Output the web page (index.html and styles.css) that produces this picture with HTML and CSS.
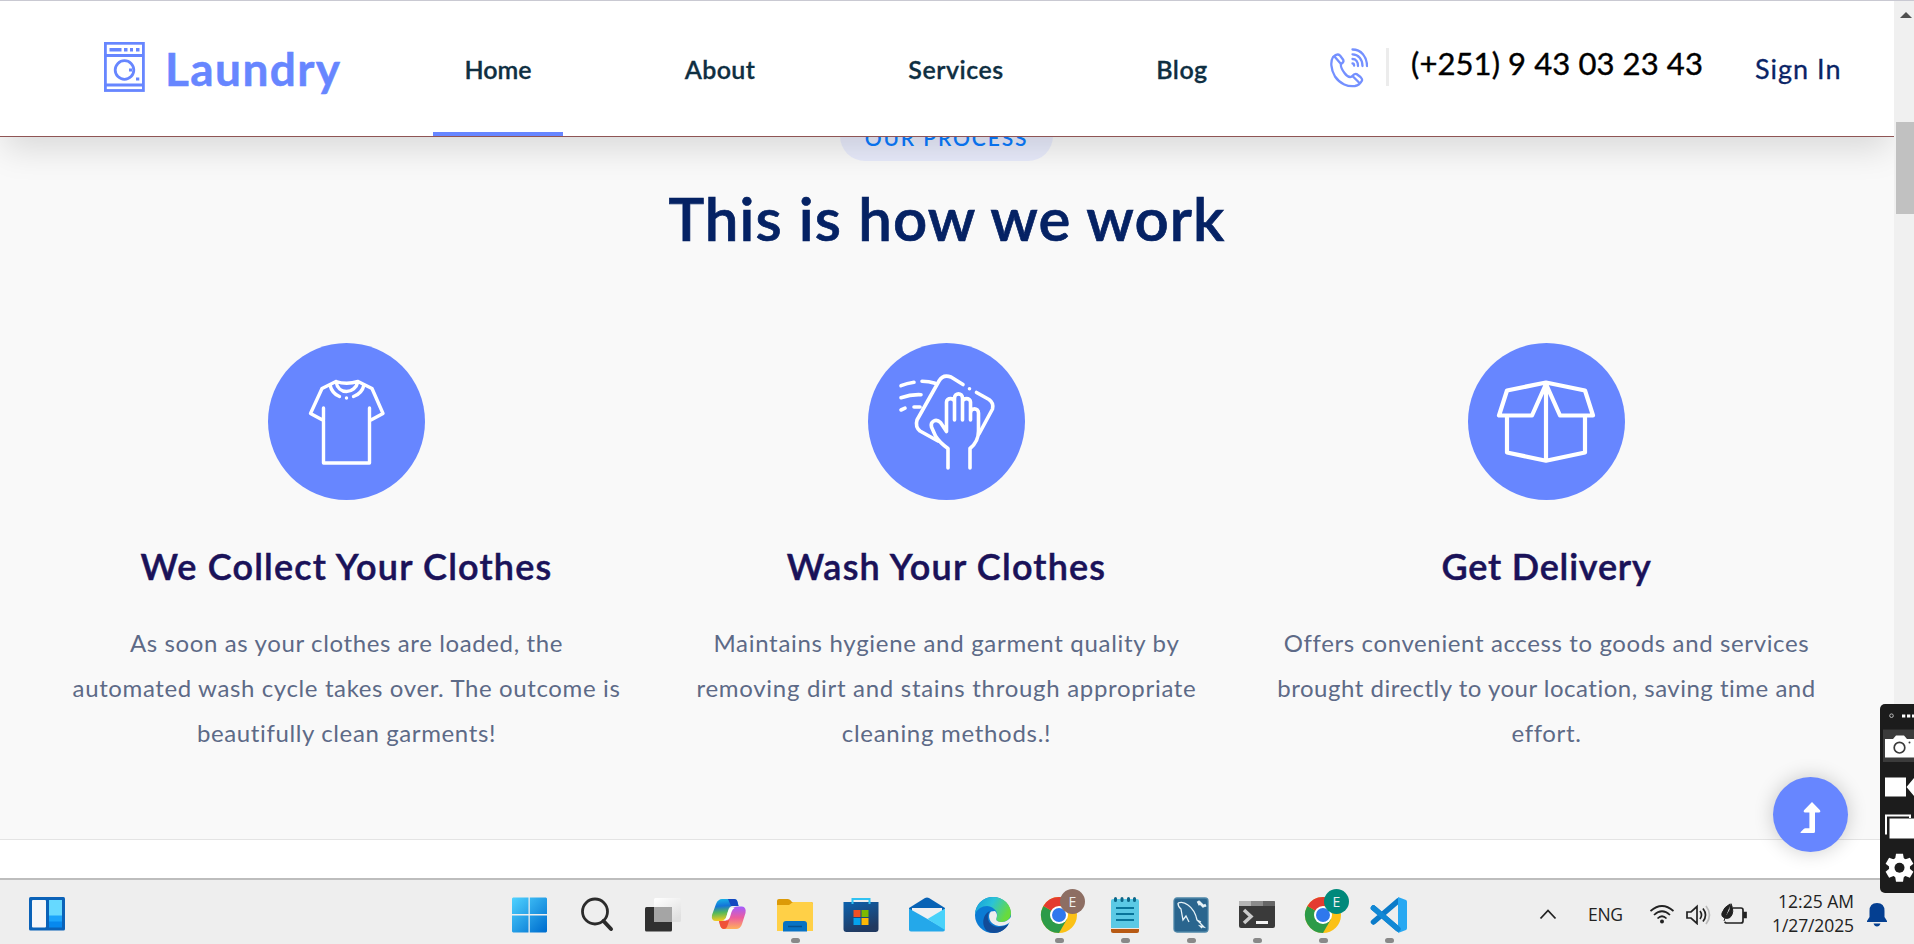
FILE: index.html
```html
<!DOCTYPE html>
<html lang="en">
<head>
<meta charset="utf-8">
<title>Laundry</title>
<link rel="stylesheet" href="styles.css">
</head>
<body>
<div class="browser">
  <div class="page">
    <header class="header">
      <a class="logo">
        <svg width="41" height="50" viewBox="0 0 41 50" fill="none" stroke="#6786ff"><rect x="1.4" y="1.3" width="38" height="47.2" stroke-width="2.8"/><path d="M1 13.5h39M1 43h39" stroke-width="2.8"/><path d="M5.5 7.7h12M20 7.7h3.5M26 7.7h3M32 7.7h3.5" stroke-width="3.4"/><circle cx="20.5" cy="28" r="9.3" stroke-width="2.8"/><path d="M25 28h3M32 37h3.3" stroke-width="3.2"/></svg>
        <span class="logo-text">Laundry</span>
      </a>
      <nav class="nav">
        <a class="nav-item active"><span>Home</span></a>
        <a class="nav-item about"><span>About</span></a>
        <a class="nav-item services"><span>Services</span></a>
        <a class="nav-item blog"><span>Blog</span></a>
      </nav>
      <div class="contact">
        <svg width="38" height="40" viewBox="0 0 38 40" fill="none" stroke="#7490ff" stroke-width="2.3" stroke-linecap="round" stroke-linejoin="round"><path d="M3 9C.5 13 .5 21 5 28.500C10 36 18 39 25 38C28 37.500 31 34.500 32 32.500C32.500 31 31.500 30 30.500 29L26.500 26C25 25.500 23.500 26.500 22 28.500C20 29.500 17 28.500 14.500 25C11.500 21 10.500 18 11 16C13.500 14.500 14 13 13 11.500L10 7.500C8.500 6 6 6 3 9z"/><path d="M4.500 8.500l6.500 7.500M22.500 28l6.500 6.500"/><path d="M22.500 1.500c8.500 0 14.500 7 14.500 16.500M22.500 6.300c6 0 10 5 10 11.700M22.500 11c3.500 0 5.500 3 5.500 7M22.500 15.500c1 0 1.600.8 1.600 2.200"/></svg>
        <i class="divider"></i>
        <span class="phone">(+251) 9 43 03 23 43</span>
        <a class="signin">Sign In</a>
      </div>
    </header>
    <section class="process">
      <span class="pill">OUR PROCESS</span>
      <h2 class="title">This is how we work</h2>
      <div class="steps">
        <article class="step">
          <svg class="step-icon" viewBox="28 23 157 157" fill="none" stroke="#fff" stroke-width="3.4" stroke-linecap="round" stroke-linejoin="round"><circle cx="106.500" cy="101.500" r="78.500" fill="#6786ff" stroke="none"/><path d="M83.500 88v55h46V88M83.500 100.500L70.500 93.500L82 68.500L90 64.500L96 61.500Q106.500 65 118 61.500L124 64.500L132 68.500L143 93.500L130 100.500M96 61.500C97 68 101.500 71.500 106.500 71.500S116.500 68 118 61.500M90 65Q92 73.500 99.500 76.500M124 65Q122 73.500 113.500 76.500M106.500 78v.1"/></svg>
          <h3 class="s1">We Collect Your Clothes</h3>
          <p>As soon as your clothes are loaded, the<br>automated wash cycle takes over. The outcome is<br>beautifully clean garments!</p>
        </article>
        <article class="step">
          <svg class="step-icon" viewBox="28 23 157 157" fill="none" stroke="#fff" stroke-width="3.6" stroke-linecap="round" stroke-linejoin="round"><circle cx="106.500" cy="101.500" r="78.500" fill="#6786ff" stroke="none"/><path d="M108 148V128.500C103 125 99 121.500 95.500 116L91.500 107C90 101.500 96 98 100.500 102.500L106.500 111.500V82C106.500 77.500 114.500 77.500 114.500 82V100V78C114.500 72.500 122.500 72.500 122.500 78V100V82C122.500 77.500 130.500 77.500 130.500 82V100V93C130.500 87.500 138.500 87.500 138.500 93V111C138.500 118 135.500 124 130 128.500V148"/><path d="M98 121L80 111Q75 107 77 100L99 61Q103 54 111 57L123 64.500M129.500 68.700v.1M136.500 72.500L149 79.500Q154 83 152.500 89L139 114M61 65.700q6-2.500 13-3.500M82 61.200q7 0 13 2M61 77.700q10-3.500 20-3M61 90l4-1.800M74 87h6"/></svg>
          <h3 class="s2">Wash Your Clothes</h3>
          <p class="p2">Maintains hygiene and garment quality by<br>removing dirt and stains through appropriate<br>cleaning methods.!</p>
        </article>
        <article class="step">
          <svg class="step-icon" viewBox="28 23 157 157" fill="none" stroke="#fff" stroke-width="4.2" stroke-linejoin="round"><circle cx="106.500" cy="101.500" r="78.500" fill="#6786ff" stroke="none"/><path d="M106 62.500L67 70.500L59 95.500H92L106 64L120 95.500H153L145 70.500ZM67 96v36.500l39 8.200l39-8.200V96M106 62v78"/></svg>
          <h3 class="s3">Get Delivery</h3>
          <p class="p3">Offers convenient access to goods and services<br><span>brought directly to your location, saving time and</span><br>effort.</p>
        </article>
      </div>
    </section>
  </div>
  <div class="scrollbar"><i class="arrow"></i><i class="thumb"></i></div>
</div>

<button class="to-top">
  <svg width="75" height="75" viewBox="0 0 75 75"><path d="M39 25l8 8.200q1 2-1 2.300H42V54.500q0 1.500-1.500 1.500H28q-1 0-.3-1l3-3q.7-.7 1.700-.7h4V35.500H32q-2-.3-1-2.300z" fill="#fff"/></svg>
</button>

<div class="capture">
  <svg width="34" height="189" viewBox="1880 704 34 189">
    <circle cx="1891.500" cy="715.700" r="1.800" fill="none" stroke="#bbb"/><path d="M1902 714.500h3.300v3h-3.300zM1907 714.500h3.300v3H1907zM1912 714.500h3v3h-3z" fill="#fff"/>
    <path d="M1883 729.500h31V762h-31z" fill="#3b3b3b"/>
    <path d="M1885 739h8l3-3.500h8l3 3.500h8v18.500h-30z" fill="#fff"/><circle cx="1899.500" cy="747.700" r="5.300" fill="#fff" stroke="#3b3b3b" stroke-width="1.700"/><circle cx="1909.500" cy="742.500" r="1" fill="#3b3b3b"/>
    <path d="M1885 777.500h21v19h-21zM1906.500 787l7.500-9v18z" fill="#fff"/>
    <path d="M1886 834.500v-19h24v2.500" fill="none" stroke="#fff" stroke-width="2"/><path d="M1889.500 818.500h25v20h-25z" fill="#fff"/>
    <g fill="#fff" transform="translate(1899.500 867.700)"><circle r="10.500"/><g id="tooth"><path d="M-4.500-8L-3.500-14h7l1 6v16l-1 6h-7l-1-6z"/></g><use href="#tooth" transform="rotate(60)"/><use href="#tooth" transform="rotate(120)"/><circle r="5" fill="#1c1c1c"/></g>
  </svg>
</div>

<footer class="taskbar">
  <svg class="widgets" width="36" height="34" viewBox="0 0 36 34"><rect width="36" height="33.500" rx="1.500" fill="#0b62b8"/><rect x="3" y="3" width="14" height="27.500" rx="1" fill="#f6f6f8"/><path d="M20 3h13v16H20z" fill="#66d9ff"/><path d="M20 18.500h13V25H20z" fill="#1ba4fb"/><path d="M20 24.500h13v6H20z" fill="#0788ee"/></svg>
  <div class="apps">
    <div class="app"><svg viewBox="0 0 36 36"><defs><linearGradient id="win" gradientUnits="userSpaceOnUse" x1="1" y1="1" x2="34" y2="34"><stop stop-color="#4fd2ff"/><stop offset="1" stop-color="#0070d0"/></linearGradient></defs><path d="M2 .5H17.500V17H1V1.500zM18.800.5H35l1 1V17H18.800zM1 18.500h16.500V35.500H2l-1-1zM18.800 18.500H36v16l-1 1H18.800z" fill="url(#win)"/></svg></div>
    <div class="app"><svg viewBox="0 0 36 36" fill="none" stroke="#2b2b2b"><circle cx="18" cy="14.500" r="12.500" stroke-width="2.800"/><path d="M26.500 24l7.500 8" stroke-width="4" stroke-linecap="round"/></svg></div>
    <div class="app"><svg viewBox="0 0 36 36"><defs><linearGradient id="pane" x2=".6" y2="1"><stop stop-color="#fff"/><stop offset="1" stop-color="#e0e0e0"/></linearGradient></defs><rect x="2" y="10" width="27" height="24.500" rx="1.500" fill="#303030"/><rect x="11" y="1" width="27" height="24" rx="1.500" fill="url(#pane)"/><path d="M11 10h18v15H11z" fill="#a5a5a5"/></svg></div>
    <div class="app shift"><svg viewBox="0 0 36 36"><defs><linearGradient id="ca" x2=".1" y2="1"><stop stop-color="#18b8e8"/><stop offset=".35" stop-color="#1474d8"/><stop offset=".65" stop-color="#55b95a"/><stop offset="1" stop-color="#f2cb20"/></linearGradient><linearGradient id="cb" x2="0" y2="1"><stop stop-color="#a35cff"/><stop offset=".5" stop-color="#ed5d9d"/><stop offset="1" stop-color="#ffb15b"/></linearGradient></defs><path d="M8 3Q9 2 11 2H23Q26 2 26.500 5L27.500 9H22Q18 9 17 14L15 21Q14 24 10 24H5Q0 24 1 18L5 7Q6 4 8 3z" fill="url(#ca)"/><path d="M17 2H23Q26 2 26.500 5L27.500 9H20z" fill="#1447c0"/><path d="M27 9.500H31Q35.500 10 34.500 16L31 27Q29.500 32 25 32H13Q10 32 9 28L8 24H12Q17 24 18.500 19L20.500 13Q22 9.500 27 9.500z" fill="url(#cb)"/><path d="M8 24h7q3 0 4-3l-3 9q-1 2-3 2-3 0-4-4z" fill="#ef5238"/><path d="M20 11h3.500q-2 1-3 4l-1.500 5q-1 3-4 3h-2.500q2-.5 3-3.500l1.500-5Q18 11.500 20 11z" fill="#fff"/></svg></div>
    <div class="app run"><svg viewBox="0 0 36 36"><path d="M0 4q0-2 2-2h9q2 0 4 3h19q2 0 2 2v7H0z" fill="#dc9a08"/><path d="M0 8h12l4-3h18q2 0 2 2v27H0z" fill="#ffd047"/><path d="M6 34.500V27q0-3 3-3h18q3 0 3 3v7.500z" fill="#0872c4"/><path d="M11 29.500h14" stroke="#07518f" stroke-width="1.500"/></svg></div>
    <div class="app"><svg viewBox="0 0 36 36"><defs><linearGradient id="st" x2=".4" y2="1"><stop stop-color="#0c62ae"/><stop offset="1" stop-color="#213960"/></linearGradient></defs><path d="M.5 5h35v27q0 3-3 3h-29q-3 0-3-3z" fill="url(#st)"/><path d="M9.500 7V2h17v5" fill="none" stroke="#31c2f2" stroke-width="2"/><path d="M10.500 13h7v7h-7z" fill="#f15024"/><path d="M18.500 13h7v7h-7z" fill="#7db900"/><path d="M10.500 21h7v7h-7z" fill="#05a3ed"/><path d="M18.500 21h7v7h-7z" fill="#ffb805"/></svg></div>
    <div class="app"><svg viewBox="0 0 36 36"><path d="M0 11L16 1q2-1.200 4 0L36 11v6H0z" fill="#0862b5"/><path d="M3 11h30v10L18 27 3 20z" fill="#f0f0f2"/><path d="M0 11.500L36 32q0 2.500-2 2.500H2q-2 0-2-2z" fill="#24a8ea"/><path d="M36 11.500V33L18.500 22z" fill="#49d2fa"/></svg></div>
    <div class="app"><svg viewBox="0 0 36 36"><defs><linearGradient id="ed" x2="1" y2=".4"><stop stop-color="#139bdc"/><stop offset=".5" stop-color="#2bc3d7"/><stop offset="1" stop-color="#68db3d"/></linearGradient></defs><circle cx="18" cy="18" r="18" fill="#0b7bd4"/><path d="M0 17C1 6 9 0 18 0C29 0 36 8 36 16C36 22 31 25 27 25C22 25 20.500 23 21.500 21C24 16 20 10 12 9Q4 9 0 17z" fill="url(#ed)"/><path d="M15 14C10 20 14 30 24 30Q29 30 33.500 27C29 36 18 38 12 34C5 27 9 16 15 14z" fill="#124c98"/><path d="M16 14.500C12 18 14 28 24 29Q30 29 34 26L36 24V20Q32 25 27 25C22 25 20.500 23 21.500 21Q23 17 20 14z" fill="#eee"/></svg></div>
    <div class="app run"><svg viewBox="0 0 36 36"><g id="chrome"><circle cx="18" cy="18" r="18" fill="#fbc116"/><path d="M18 18L2.400 9A18 18 0 0 0 18 36L25.800 22.500z" fill="#2c9b48"/><path d="M18 18L2.400 9A18 18 0 0 1 33.600 9H18z" fill="#e43b30"/><circle cx="18" cy="18" r="9" fill="#fff"/><circle cx="18" cy="18" r="7" fill="#2f78ed"/></g></svg><b class="badge brown">E</b></div>
    <div class="app run"><svg viewBox="0 0 36 36"><path d="M4 31h28v3q0 2-2 2H6q-2 0-2-2z" fill="#b85a14"/><path d="M4 29h28v3H4z" fill="#f4e6dc"/><path d="M4 4q0-2 2-2h24q2 0 2 2v27H4z" fill="#5bc9e5"/><path d="M9 11h18M9 17h18M9 23h18" stroke="#08749a" stroke-width="1.800"/><path d="M8.500 1.500v2M15 1.500v2M21.500 1.500v2M27.500 1.500v2" stroke="#0c6688" stroke-width="3" stroke-linecap="round"/></svg></div>
    <div class="app run"><svg viewBox="0 0 36 36" fill="none" stroke="#e6f2f7" stroke-width="1.300"><rect x="1" y="1" width="34" height="34" rx="3" fill="#2a658e" stroke="#4d86a8"/><path d="M5 6q5-2 10 2 7 5 9 15l7 7-4-1 2 2M5 6q0 4 3 6 1 6 2 11l3-4 3 6M24 23l4 2"/><path d="M26 5l5 5M25 4l2 4M31 9l2-1" stroke-width="2.800"/></svg></div>
    <div class="app run"><svg viewBox="0 0 36 36"><rect y="4" width="36" height="27" rx="2" fill="#3a3a3a"/><path d="M0 9V5q0-1 1-1h11v5z" fill="#b5b5b5"/><path d="M12 4h12v5H12z" fill="#8c8c8c"/><path d="M24 4h11q1 0 1 1v4H24z" fill="#666"/><path d="M5 13l7 6.500-7 6.500" fill="none" stroke="#ccc" stroke-width="3.500"/><path d="M17 24h12v3H17z" fill="#f3f3f3"/></svg></div>
    <div class="app run"><svg viewBox="0 0 36 36"><use href="#chrome"/></svg><b class="badge teal">E</b></div>
    <div class="app run"><svg viewBox="0 0 36 36"><path d="M2.500 11L27 32M27 4L2.500 25" stroke="#0b7bc9" stroke-width="5.500" stroke-linecap="round"/><path d="M27 0l8 3q1 .5 1 2v26q0 1.500-1 2l-8 3z" fill="#28a8f2"/><path d="M2.500 11L27 32" stroke="#1188d5" stroke-width="5.500" stroke-linecap="round"/></svg></div>
  </div>
  <div class="tray">
    <svg width="18" height="12" viewBox="0 0 18 12" fill="none" stroke="#222" stroke-width="1.800"><path d="M1.500 10.500L9 2.500l7.500 8"/></svg>
    <span class="lang">ENG</span>
    <svg class="status" width="97" height="24" viewBox="1650 900 97 24" fill="none" stroke="#222" stroke-width="1.700"><path d="M1650.500 910q11.500-10 23 0M1654 914q8-7.500 16 0M1657.500 917.500q4.500-4.500 9 0"/><circle cx="1662" cy="920.500" r="2" fill="#222" stroke="none"/><path d="M1687 911h4l6-5.500v17l-6-5.500h-4zM1700 910q3 4 0 8M1703 907.500q5 6.500 0 13"/><path d="M1706 905q7 9 0 18" stroke="#bbb"/><path d="M1733 907h8q2 0 2 2v11q0 2-2 2h-15l-1.500-1"/><path d="M1744 911.500h2v5h-2z" fill="#222"/><path d="M1731 902.500q4 9-1 14-3 1.500-5 .5l-1 3M1730 903q-6 3-8 9-1 4 3 5l5-8z" fill="#222" stroke-width="1"/></svg>
    <div class="clock"><span>12:25 AM</span><span class="date">1/27/2025</span></div>
    <svg width="20" height="24" viewBox="0 0 20 24" fill="#043f91"><path d="M10 0q7.500 0 7.500 8v6l2.500 4v1H0v-1l2.500-4V8Q2.500 0 10 0zM6.500 20.500h7q-1 3-3.500 3t-3.500-3z"/></svg>
  </div>
</footer>
</body>
</html>
```
FILE: styles.css
```css
* { box-sizing: border-box; }
body {
  margin: 0;
  width: 1914px;
  height: 944px;
  overflow: hidden;
  display: flex;
  flex-direction: column;
  background: #fff;
  font-family: Lato, "Open Sans", sans-serif;
}
svg { display: block; flex: none; }

.browser { display: flex; height: 878px; border-top: 1px solid #c9c9d2; }
.page { width: 1894px; height: 877px; background: #fff; overflow: hidden; }

.header {
  position: relative;
  z-index: 2;
  display: flex;
  height: 136px;
  background: #fff;
  border-bottom: 1px solid #8f5555;
  box-shadow: 0 16px 32px -4px rgba(0, 0, 0, .13);
}
.logo { display: flex; align-items: flex-start; width: 433px; padding: 41px 0 0 104px; }
.logo-text {
  margin: -1px 0 0 20px;
  font-size: 46px;
  line-height: 56px;
  font-weight: 700;
  letter-spacing: 1.4px;
  color: #6786ff;
  -webkit-text-stroke: .5px #6786ff;
}
.nav { display: flex; width: 898px; color: #0f2f42; font-size: 25px; font-weight: 600; -webkit-text-stroke: .3px #0f2f42; }
.nav-item { display: flex; padding-top: 53px; line-height: 30px; width: 130px; justify-content: center; }
.nav-item.active { border-bottom: 4px solid #6786ff; }
.nav-item.about { width: 154px; margin-left: 80px; letter-spacing: .35px; }
.nav-item.services { width: 160px; margin-left: 79px; letter-spacing: .5px; }
.nav-item.blog { width: 120px; margin-left: 86px; letter-spacing: .5px; }
.contact { display: flex; align-items: flex-start; padding-top: 47px; }
.contact > svg { margin-left: -1px; }
.divider { width: 3px; height: 38px; margin-left: 18px; background: #ececec; }
.phone {
  width: 334px;
  padding-left: 22px;
  margin-top: -4px;
  font-size: 31px;
  line-height: 38px;
  letter-spacing: .1px;
  color: #000;
  -webkit-text-stroke: .4px #000;
  white-space: nowrap;
}
.signin { margin: 4px 0 0 32px; font-size: 27px; line-height: 34px; letter-spacing: 1px; color: #0a2466; white-space: nowrap; -webkit-text-stroke: .3px #0a2466; }

.process {
  display: flex;
  flex-direction: column;
  align-items: center;
  height: 703px;
  background: #f9f9f9;
  border-bottom: 1px solid #e4e4e4;
}
.pill {
  width: 213px;
  height: 50px;
  margin: -26px 1px 0 0;
  padding-top: 2px;
  flex: none;
  border-radius: 25px;
  background: #e8ebfb;
  color: #0a7bff;
  font-size: 21px;
  font-weight: 600;
  line-height: 50px;
  letter-spacing: 1.9px;
  text-align: center;
}
.title { margin: 21px 0 0; font-size: 60px; line-height: 72px; font-weight: 600; letter-spacing: 1.1px; color: #052264; -webkit-text-stroke: .7px #052264; }
.steps { display: grid; grid-template-columns: repeat(3, 600px); margin: 89px 1px 0 0; }
.step { display: flex; flex-direction: column; align-items: center; }
.step-icon { width: 157px; height: 157px; }
.step h3 { margin: 44px 0 0; font-size: 36px; line-height: 44px; font-weight: 600; letter-spacing: 1.2px; color: #1a1259; -webkit-text-stroke: .5px #1a1259; }
.step .s3 { letter-spacing: .8px; }
.step p { margin: 32px 0 0; font-size: 24px; line-height: 45px; letter-spacing: .62px; color: #5d6a87; text-align: center; white-space: nowrap; }
.step .p2 { letter-spacing: .7px; }
.p3 span { letter-spacing: .5px; }

.scrollbar { display: flex; flex-direction: column; align-items: flex-end; width: 20px; background: #f0f0f0; }
.arrow { margin: 11px 2px 0 0; border: 6px solid transparent; border-top: 0; border-bottom-color: #505050; }
.thumb { width: 18px; height: 92px; margin-top: 104px; background: #c1c1c1; }

.to-top {
  position: absolute;
  left: 1773px;
  top: 777px;
  width: 75px;
  height: 75px;
  padding: 0;
  border: 0;
  border-radius: 50%;
  background: #6786ff;
  box-shadow: 0 0 20px rgba(0, 0, 0, .2);
}
.capture { position: absolute; left: 1880px; top: 704px; height: 189px; z-index: 3; background: #1c1c1c; border-radius: 5px 0 0 5px; overflow: hidden; }

.taskbar { position: relative; display: flex; height: 66px; background: #eee; border-top: 2px solid #bdbdbd; color: #222; font-family: "Open Sans", sans-serif; }
.widgets { margin: 17px 446px 0 29px; }
.apps { display: flex; gap: 30px; padding-top: 17px; }
.app { position: relative; width: 36px; height: 47px; }
.app.shift { margin-left: 2px; }
.app svg { width: 36px; height: 36px; overflow: visible; }
.app.run::after { content: ""; display: block; width: 9px; height: 5px; margin: 5px auto 0; border-radius: 3px; background: #898989; }
.badge { position: absolute; left: 19px; top: -8px; width: 25px; height: 25px; border-radius: 50%; color: #eee; font: 400 14px/25px "Open Sans", sans-serif; text-align: center; }
.brown { background: #8d6e63; }
.teal { background: #00897b; }
.tray { display: flex; align-items: flex-start; margin-left: 134px; }
.tray > svg:first-child { margin-top: 28px; margin-left: -2px; }
.lang { width: 62px; margin: 21px 0 0 31px; font-size: 17.500px; line-height: 26px; letter-spacing: -.3px; }
.status { margin-top: 21px; }
.clock { display: flex; flex-direction: column; align-items: flex-end; width: 107px; padding-top: 9px; font-size: 17.500px; line-height: 24px; }
.date { letter-spacing: -.1px; }
.tray > svg:last-child { margin: 23px 0 0 13px; }
```
